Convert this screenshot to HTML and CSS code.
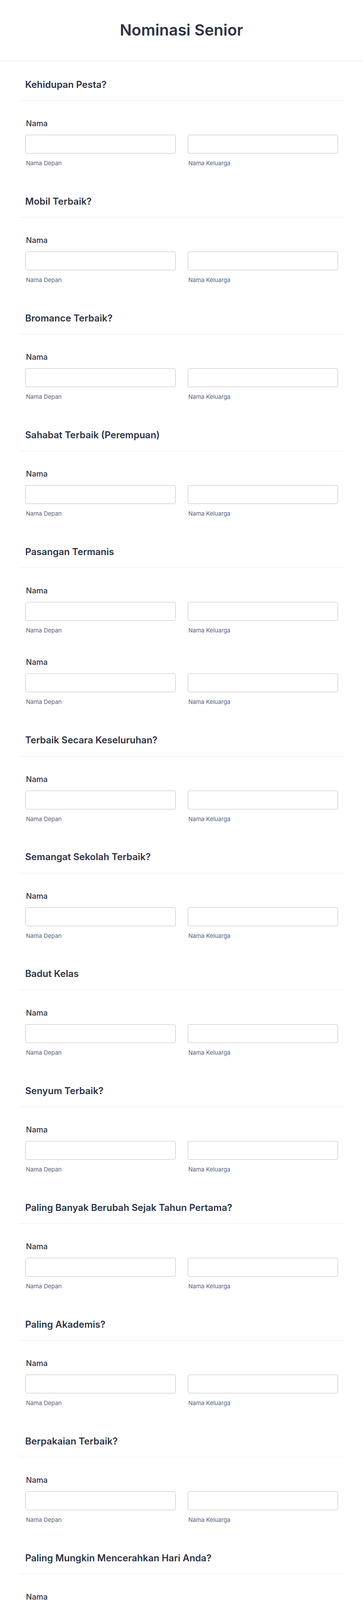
FILE: index.html
```html
<!DOCTYPE html>
<html lang="id">
<head>
<meta charset="utf-8">
<title>Nominasi Senior</title>
<link rel="stylesheet" href="styles.css">
</head>
<body>
<header class="page-header">
  <h1 class="title">Nominasi Senior</h1>
</header>
<main class="form">
  <section class="section">
    <div class="section-head"><h2 class="heading">Kehidupan Pesta?</h2></div>
    <div class="fields">
      <div class="field"><label class="label">Nama</label>
        <div class="name-row">
          <div class="col"><input class="input" type="text"><span class="sublabel">Nama Depan</span></div>
          <div class="col"><input class="input" type="text"><span class="sublabel">Nama Keluarga</span></div>
        </div>
      </div>
    </div>
  </section>
  <section class="section">
    <div class="section-head"><h2 class="heading">Mobil Terbaik?</h2></div>
    <div class="fields">
      <div class="field"><label class="label">Nama</label>
        <div class="name-row">
          <div class="col"><input class="input" type="text"><span class="sublabel">Nama Depan</span></div>
          <div class="col"><input class="input" type="text"><span class="sublabel">Nama Keluarga</span></div>
        </div>
      </div>
    </div>
  </section>
  <section class="section">
    <div class="section-head"><h2 class="heading">Bromance Terbaik?</h2></div>
    <div class="fields">
      <div class="field"><label class="label">Nama</label>
        <div class="name-row">
          <div class="col"><input class="input" type="text"><span class="sublabel">Nama Depan</span></div>
          <div class="col"><input class="input" type="text"><span class="sublabel">Nama Keluarga</span></div>
        </div>
      </div>
    </div>
  </section>
  <section class="section">
    <div class="section-head"><h2 class="heading">Sahabat Terbaik (Perempuan)</h2></div>
    <div class="fields">
      <div class="field"><label class="label">Nama</label>
        <div class="name-row">
          <div class="col"><input class="input" type="text"><span class="sublabel">Nama Depan</span></div>
          <div class="col"><input class="input" type="text"><span class="sublabel">Nama Keluarga</span></div>
        </div>
      </div>
    </div>
  </section>
  <section class="section">
    <div class="section-head"><h2 class="heading">Pasangan Termanis</h2></div>
    <div class="fields">
      <div class="field"><label class="label">Nama</label>
        <div class="name-row">
          <div class="col"><input class="input" type="text"><span class="sublabel">Nama Depan</span></div>
          <div class="col"><input class="input" type="text"><span class="sublabel">Nama Keluarga</span></div>
        </div>
      </div>
      <div class="field"><label class="label">Nama</label>
        <div class="name-row">
          <div class="col"><input class="input" type="text"><span class="sublabel">Nama Depan</span></div>
          <div class="col"><input class="input" type="text"><span class="sublabel">Nama Keluarga</span></div>
        </div>
      </div>
    </div>
  </section>
  <section class="section">
    <div class="section-head"><h2 class="heading">Terbaik Secara Keseluruhan?</h2></div>
    <div class="fields">
      <div class="field"><label class="label">Nama</label>
        <div class="name-row">
          <div class="col"><input class="input" type="text"><span class="sublabel">Nama Depan</span></div>
          <div class="col"><input class="input" type="text"><span class="sublabel">Nama Keluarga</span></div>
        </div>
      </div>
    </div>
  </section>
  <section class="section">
    <div class="section-head"><h2 class="heading">Semangat Sekolah Terbaik?</h2></div>
    <div class="fields">
      <div class="field"><label class="label">Nama</label>
        <div class="name-row">
          <div class="col"><input class="input" type="text"><span class="sublabel">Nama Depan</span></div>
          <div class="col"><input class="input" type="text"><span class="sublabel">Nama Keluarga</span></div>
        </div>
      </div>
    </div>
  </section>
  <section class="section">
    <div class="section-head"><h2 class="heading">Badut Kelas</h2></div>
    <div class="fields">
      <div class="field"><label class="label">Nama</label>
        <div class="name-row">
          <div class="col"><input class="input" type="text"><span class="sublabel">Nama Depan</span></div>
          <div class="col"><input class="input" type="text"><span class="sublabel">Nama Keluarga</span></div>
        </div>
      </div>
    </div>
  </section>
  <section class="section">
    <div class="section-head"><h2 class="heading">Senyum Terbaik?</h2></div>
    <div class="fields">
      <div class="field"><label class="label">Nama</label>
        <div class="name-row">
          <div class="col"><input class="input" type="text"><span class="sublabel">Nama Depan</span></div>
          <div class="col"><input class="input" type="text"><span class="sublabel">Nama Keluarga</span></div>
        </div>
      </div>
    </div>
  </section>
  <section class="section">
    <div class="section-head"><h2 class="heading">Paling Banyak Berubah Sejak Tahun Pertama?</h2></div>
    <div class="fields">
      <div class="field"><label class="label">Nama</label>
        <div class="name-row">
          <div class="col"><input class="input" type="text"><span class="sublabel">Nama Depan</span></div>
          <div class="col"><input class="input" type="text"><span class="sublabel">Nama Keluarga</span></div>
        </div>
      </div>
    </div>
  </section>
  <section class="section">
    <div class="section-head"><h2 class="heading">Paling Akademis?</h2></div>
    <div class="fields">
      <div class="field"><label class="label">Nama</label>
        <div class="name-row">
          <div class="col"><input class="input" type="text"><span class="sublabel">Nama Depan</span></div>
          <div class="col"><input class="input" type="text"><span class="sublabel">Nama Keluarga</span></div>
        </div>
      </div>
    </div>
  </section>
  <section class="section">
    <div class="section-head"><h2 class="heading">Berpakaian Terbaik?</h2></div>
    <div class="fields">
      <div class="field"><label class="label">Nama</label>
        <div class="name-row">
          <div class="col"><input class="input" type="text"><span class="sublabel">Nama Depan</span></div>
          <div class="col"><input class="input" type="text"><span class="sublabel">Nama Keluarga</span></div>
        </div>
      </div>
    </div>
  </section>
  <section class="section">
    <div class="section-head"><h2 class="heading">Paling Mungkin Mencerahkan Hari Anda?</h2></div>
    <div class="fields">
      <div class="field"><label class="label">Nama</label>
        <div class="name-row">
          <div class="col"><input class="input" type="text"><span class="sublabel">Nama Depan</span></div>
          <div class="col"><input class="input" type="text"><span class="sublabel">Nama Keluarga</span></div>
        </div>
      </div>
    </div>
  </section>
  <section class="section">
    <div class="section-head"><h2 class="heading">Paling Berprestasi?</h2></div>
    <div class="fields">
      <div class="field"><label class="label">Nama</label>
        <div class="name-row">
          <div class="col"><input class="input" type="text"><span class="sublabel">Nama Depan</span></div>
          <div class="col"><input class="input" type="text"><span class="sublabel">Nama Keluarga</span></div>
        </div>
      </div>
    </div>
  </section>
  <section class="section">
    <div class="section-head"><h2 class="heading">Kasus Senioritas Terburuk?</h2></div>
    <div class="fields">
      <div class="field"><label class="label">Nama</label>
        <div class="name-row">
          <div class="col"><input class="input" type="text"><span class="sublabel">Nama Depan</span></div>
          <div class="col"><input class="input" type="text"><span class="sublabel">Nama Keluarga</span></div>
        </div>
      </div>
    </div>
  </section>
  <section class="section">
    <div class="section-head"><h2 class="heading">Paling Mungkin Menjadi Presiden?</h2></div>
    <div class="fields">
      <div class="field"><label class="label">Nama</label>
        <div class="name-row">
          <div class="col"><input class="input" type="text"><span class="sublabel">Nama Depan</span></div>
          <div class="col"><input class="input" type="text"><span class="sublabel">Nama Keluarga</span></div>
        </div>
      </div>
    </div>
  </section>
  <section class="section">
    <div class="section-head"><h2 class="heading">Paling Teatrikal?</h2></div>
    <div class="fields">
      <div class="field"><label class="label">Nama</label>
        <div class="name-row">
          <div class="col"><input class="input" type="text"><span class="sublabel">Nama Depan</span></div>
          <div class="col"><input class="input" type="text"><span class="sublabel">Nama Keluarga</span></div>
        </div>
      </div>
    </div>
  </section>
  <section class="section">
    <div class="section-head"><h2 class="heading">Paling Mungkin Menjadi Pro?</h2></div>
    <div class="fields">
      <div class="field"><label class="label">Nama</label>
        <div class="name-row">
          <div class="col"><input class="input" type="text"><span class="sublabel">Nama Depan</span></div>
          <div class="col"><input class="input" type="text"><span class="sublabel">Nama Keluarga</span></div>
        </div>
      </div>
    </div>
  </section>
  <section class="section">
    <div class="section-head"><h2 class="heading">Paling Mungkin Berkeliling Dunia?</h2></div>
    <div class="fields">
      <div class="field"><label class="label">Nama</label>
        <div class="name-row">
          <div class="col"><input class="input" type="text"><span class="sublabel">Nama Depan</span></div>
          <div class="col"><input class="input" type="text"><span class="sublabel">Nama Keluarga</span></div>
        </div>
      </div>
    </div>
  </section>
</main>
<footer class="page-footer">
  <button class="submit" type="button">Kirim</button>
</footer>
</body>
</html>
```
FILE: styles.css
```css
* { box-sizing: border-box; }

html, body {
  margin: 0;
  padding: 0;
  background: #ffffff;
}

body {
  font-family: Inter, "Noto Sans", "Liberation Sans", sans-serif;
  color: #2c3345;
}

.page-header {
  padding: 53px 0 55px;
  border-bottom: 1px solid #e1e3eb;
  text-align: center;
}

.title {
  margin: 0;
  font-size: 40px;
  line-height: 48px;
  font-weight: 600;
  color: #2c3345;
}

.form {
  width: 835px;
  margin: 0 auto;
}

.section-head {
  padding: 44.8px 17px 26.3px;
  border-bottom: 1px solid #eaecf1;
}

.heading {
  margin: 0;
  font-size: 24px;
  line-height: 29px;
  font-weight: 600;
  color: #2c3345;
}

.fields {
  padding: 15px 17px 0;
}

.field {
  padding: 31px 0 29px;
}

.label {
  display: block;
  padding-left: 2px;
  font-size: 20px;
  line-height: 24px;
  font-weight: 500;
  color: #2c3345;
  margin-bottom: 17px;
}

.name-row {
  display: grid;
  grid-template-columns: 1fr 1fr;
  column-gap: 31px;
}

.col {
  display: flex;
  flex-direction: column;
}

.input {
  display: block;
  width: 100%;
  height: 48px;
  margin: 0;
  border: 1px solid #b8bdc9;
  border-radius: 4px;
  background: #ffffff;
  font-family: inherit;
  font-size: 16px;
}

.sublabel {
  display: block;
  margin-top: 16px;
  padding-left: 2px;
  font-size: 15px;
  line-height: 18px;
  color: #57647e;
}

.page-footer {
  border-top: 1px solid #e6e8ee;
  padding: 37px 0 40px 11px;
  display: flex;
  justify-content: center;
}

.submit {
  width: 222px;
  height: 60px;
  margin: 0;
  border: none;
  border-radius: 4px;
  background: #18bd5b;
  color: #ffffff;
  font-family: Inter, "Noto Sans", "Liberation Sans", sans-serif;
  font-size: 20px;
  font-weight: 500;
}
```
